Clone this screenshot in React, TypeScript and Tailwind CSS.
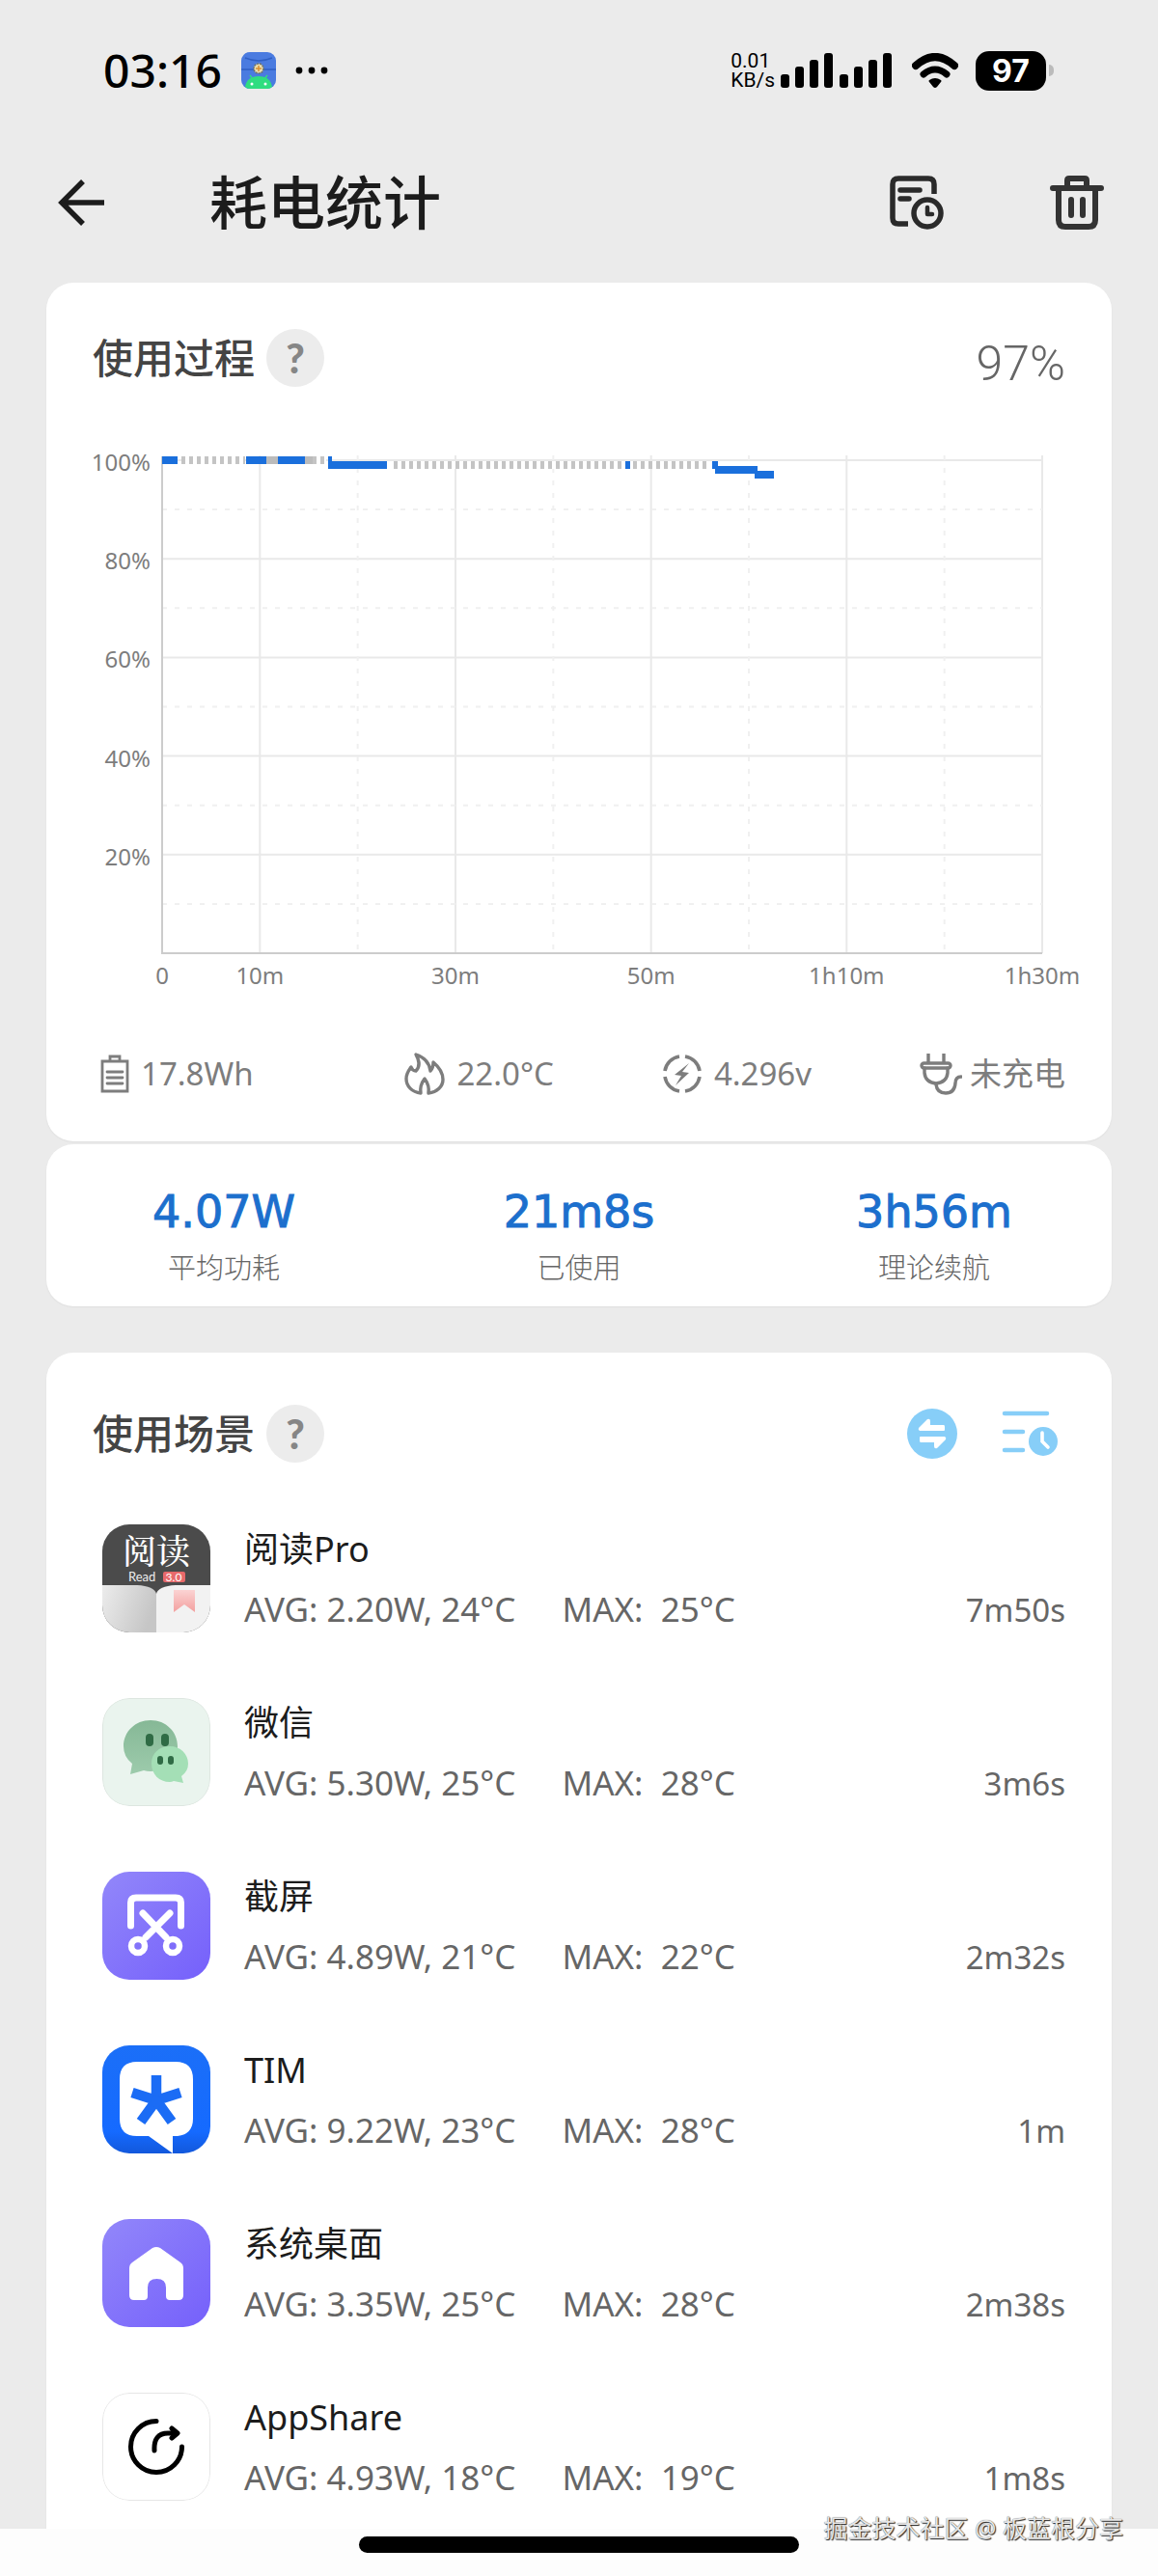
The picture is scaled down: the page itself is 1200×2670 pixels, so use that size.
import type { ReactNode } from "react";

const SCENES = [
  { name: "阅读Pro", avg: "2.20W, 24°C", max: "25°C", time: "7m50s", icon: <ReadIcon /> },
  { name: "微信", avg: "5.30W, 25°C", max: "28°C", time: "3m6s", icon: <WechatIcon /> },
  { name: "截屏", avg: "4.89W, 21°C", max: "22°C", time: "2m32s", icon: <ScreenshotIcon /> },
  { name: "TIM", avg: "9.22W, 23°C", max: "28°C", time: "1m", icon: <TimIcon /> },
  { name: "系统桌面", avg: "3.35W, 25°C", max: "28°C", time: "2m38s", icon: <HomeIcon /> },
  { name: "AppShare", avg: "4.93W, 18°C", max: "19°C", time: "1m8s", icon: <ShareIcon /> },
];

const SUMMARY = [
  { value: "4.07W", label: "平均功耗" },
  { value: "21m8s", label: "已使用" },
  { value: "3h56m", label: "理论续航" },
];

export default function App() {
  return (
    <div className="relative flex min-h-screen flex-col bg-[#ebebeb] font-['Noto_Sans','Noto_Sans_CJK_SC',sans-serif] text-[#1c1c1c]">
      <StatusBar />
      <Header />

      <main className="flex grow flex-col px-12">
        {/* 使用过程 */}
        <section className="rounded-[28px] bg-white pt-12 pb-[46px] shadow-xs">
          <div className="flex items-center justify-between px-12">
            <SectionTitle text="使用过程" />
            <span className="self-end font-['Roboto'] text-[50px] leading-[48px] font-light text-[#666]">97%</span>
          </div>
          <BatteryChart />
          <div className="mt-[54px] flex items-center gap-28 px-12 text-[33px] leading-[48px] text-[#7d7d7d]">
            <div className="mr-auto flex items-center gap-3 pl-2">
              <BatteryIcon />
              17.8Wh
            </div>
            <div className="flex items-center gap-3">
              <FireIcon />
              22.0°C
            </div>
            <div className="flex items-center gap-3">
              <VoltIcon />
              4.296v
            </div>
            <div className="flex items-center gap-2">
              <PlugIcon />
              未充电
            </div>
          </div>
        </section>

        {/* 汇总 */}
        <section className="mt-[3px] grid grid-cols-3 rounded-[28px] bg-white pt-10 pb-3 text-center shadow-xs">
          {SUMMARY.map((item) => (
            <div key={item.label}>
              <p className="font-['DejaVu_Sans'] text-[46px] leading-[60px] text-[#1c6fcd] [-webkit-text-stroke:1px_#1c6fcd]">
                {item.value}
              </p>
              <p className="text-[29px] leading-[56px] font-light text-[#666]">{item.label}</p>
            </div>
          ))}
        </section>

        {/* 使用场景 */}
        <section className="mt-12 grow rounded-t-[28px] bg-white px-12 pt-[54px] pb-5 shadow-xs">
          <div className="flex items-center justify-between">
            <SectionTitle text="使用场景" />
            <div className="flex items-center gap-[46px] pr-[6px]">
              <button type="button" aria-label="切换">
                <SwapIcon />
              </button>
              <button type="button" aria-label="按时间排序">
                <SortTimeIcon />
              </button>
            </div>
          </div>
          <ul className="mt-14 flex flex-col gap-[53px] pl-[10px]">
            {SCENES.map((scene) => (
              <li key={scene.name} className="flex items-center">
                <AppTile>{scene.icon}</AppTile>
                <div className="ml-[35px] grow pt-[6px]">
                  <p className="text-[36px] leading-[56px]">{scene.name}</p>
                  <div className="flex items-baseline pt-1 text-[35px] leading-[60px] text-[#666]">
                    <span>AVG: {scene.avg}</span>
                    <span className="ml-12 whitespace-pre">MAX:  {scene.max}</span>
                    <span className="ml-auto text-[33px]">{scene.time}</span>
                  </div>
                </div>
              </li>
            ))}
          </ul>
        </section>
      </main>

      <footer className="flex h-[49px] justify-center bg-[#fdfdfd] pt-2">
        <div className="h-[17px] w-[38%] rounded-full bg-black" />
      </footer>

      <p className="absolute right-9 bottom-8 text-[25px] leading-9 text-[#e6e6e6] [text-shadow:1px_1px_1px_#222,0_0_1px_#555]">
        掘金技术社区 @ 板蓝根分享
      </p>
    </div>
  );
}

function StatusBar() {
  return (
    <div className="flex h-[146px] items-center justify-between pr-[108px] pl-[107px] text-black">
      <div className="flex items-center">
        <span className="text-[48px] leading-[48px] font-medium">03:16</span>
        <svg className="ml-5" width="36" height="38" viewBox="0 0 36 38" aria-hidden="true">
          <rect width="36" height="38" rx="9" fill="#4a7be0" />
          <path d="M4 6Q18 12 32 6M0 18H36" stroke="#2f5fc4" strokeWidth="1.5" fill="none" />
          <path d="M4 36Q6 25 18 25T32 36Q30 38 27 38H9Q6 38 4 36Z" fill="#2fdd80" />
          <path d="M9 24L12 28M27 24L24 28" stroke="#2fdd80" strokeWidth="1.5" />
          <circle cx="18" cy="17" r="5" fill="#e8dcae" stroke="#6f7368" strokeWidth="1.5" strokeDasharray="2 1" />
          <path d="M18 14V20M15 17H21" stroke="#d9902f" strokeWidth="1.5" />
          <circle cx="11" cy="33" r="1.5" fill="#fff" />
          <circle cx="25" cy="33" r="1.5" fill="#fff" />
        </svg>
        <svg className="ml-5" width="34" height="8" viewBox="0 0 34 8" aria-hidden="true">
          <circle cx="4" cy="4" r="3.4" />
          <circle cx="17" cy="4" r="3.4" />
          <circle cx="30" cy="4" r="3.4" />
        </svg>
      </div>

      <div className="flex items-center">
        <div className="font-['Roboto'] text-[21px] leading-[20px]">
          <p>0.01</p>
          <p>KB/s</p>
        </div>
        <svg className="ml-[6px]" width="116" height="36" viewBox="0 0 116 36" aria-hidden="true">
          <rect x="0" y="22" width="9" height="14" rx="3" />
          <rect x="15" y="14" width="9" height="22" rx="3" />
          <rect x="30" y="7" width="9" height="29" rx="3" />
          <rect x="45" y="0" width="9" height="36" rx="3" />
          <rect x="61" y="22" width="9" height="14" rx="3" />
          <rect x="76" y="14" width="9" height="22" rx="3" />
          <rect x="91" y="7" width="9" height="29" rx="3" />
          <rect x="106" y="0" width="9" height="36" rx="3" />
        </svg>
        <svg className="ml-5" width="48" height="36" viewBox="0 0 48 36" aria-hidden="true">
          <path d="M4 13Q24 -5 44 13" fill="none" stroke="#000" strokeWidth="8" strokeLinecap="round" />
          <path d="M12 22Q24 12 36 22" fill="none" stroke="#000" strokeWidth="7" strokeLinecap="round" />
          <path d="M18 28Q24 24 30 28Q31 29 30 30L26 35Q24 37 22 35L18 30Q17 29 18 28Z" />
        </svg>
        <div className="ml-[18px] flex h-[41px] w-[73px] items-center justify-center rounded-[14px] bg-black font-['Inter'] text-[32px] leading-[41px] font-bold text-white">
          97
        </div>
        <div className="ml-[3px] h-3 w-[5px] rounded-r-full bg-[#bbb]" />
      </div>
    </div>
  );
}

function Header() {
  return (
    <header className="flex h-[147px] items-center pr-[56px] pb-5 pl-[60px]">
      <button type="button" aria-label="返回">
        <svg width="49" height="48" viewBox="0 0 49 48" fill="none" stroke="#1c1c1c" strokeWidth="5.5" aria-hidden="true">
          <path d="M26 2L4 24L26 46M4 24H48" />
        </svg>
      </button>
      <h1 className="ml-[108px] text-[60px] leading-[80px] font-medium">耗电统计</h1>
      <button type="button" aria-label="历史记录" className="ml-auto">
        <svg width="58" height="58" viewBox="0 0 58 58" fill="none" stroke="#2a2a2a" strokeWidth="5.5" strokeLinecap="round" strokeLinejoin="round" aria-hidden="true">
          <path d="M20 51H10Q4 51 4 45V10Q4 4 10 4H41Q47 4 47 10V20" strokeLinecap="butt" />
          <path d="M12 16H32M12 25H21" />
          <circle cx="40" cy="40" r="14" />
          <path d="M40 34V41H45" strokeWidth="4.5" />
        </svg>
      </button>
      <button type="button" aria-label="删除" className="ml-[109px]">
        <svg width="56" height="58" viewBox="0 0 56 58" fill="none" stroke="#333" strokeWidth="6" strokeLinecap="round" strokeLinejoin="round" aria-hidden="true">
          <path d="M3 14H53M18 13V6Q18 4 20 4H36Q38 4 38 6V13" />
          <path d="M9 15V47Q9 54 16 54H40Q47 54 47 47V15M22 26V42M34 26V42" />
        </svg>
      </button>
    </header>
  );
}

function SectionTitle({ text }: { text: string }) {
  return (
    <div className="flex items-center gap-3">
      <h2 className="text-[42px] leading-[60px] font-medium text-[#444]">{text}</h2>
      <button
        type="button"
        aria-label={`${text}说明`}
        className="size-[60px] rounded-full bg-[#ececec] text-center font-['Lato'] text-[42px] leading-[60px] font-black text-[#868686]"
      >
        ?
      </button>
    </div>
  );
}

const TOP = 22;
const BOTTOM = 533;
const LEFT = 120;
const RIGHT = 1032;

const toX = (minute: number) => LEFT + ((RIGHT - LEFT) * minute) / 90;
const toY = (percent: number) => BOTTOM - ((BOTTOM - TOP) * percent) / 100;

const X_LABELS = [
  { minute: 0, text: "0" },
  { minute: 10, text: "10m" },
  { minute: 30, text: "30m" },
  { minute: 50, text: "50m" },
  { minute: 70, text: "1h10m" },
  { minute: 90, text: "1h30m" },
];

// 亮屏: 蓝色实线, 熄屏: 灰色虚线
const SCREEN_ON = [
  { x: 120, w: 16, y: 18 },
  { x: 207, w: 21, y: 18 },
  { x: 240, w: 28, y: 18 },
  { x: 292, w: 4, y: 18 },
  { x: 292, w: 61, y: 23 },
  { x: 600, w: 5, y: 23 },
  { x: 690, w: 6, y: 23 },
  { x: 693, w: 44, y: 28 },
  { x: 734, w: 20, y: 33 },
];
const SCREEN_OFF = [
  { from: 140, to: 206, y: 22 },
  { from: 276, to: 290, y: 22 },
  { from: 360, to: 598, y: 27 },
  { from: 608, to: 686, y: 27 },
];

function BatteryChart() {
  return (
    <svg className="mt-[54px] block h-auto w-full font-['Noto_Sans']" viewBox="0 0 1104 580" role="img" aria-label="电量变化曲线">
      <g stroke="#e9e9e9" strokeWidth="2">
        {[20, 40, 60, 80, 100].map((p) => (
          <line key={p} x1={LEFT} x2={RIGHT} y1={toY(p)} y2={toY(p)} />
        ))}
        {[10, 30, 50, 70, 90].map((m) => (
          <line key={m} x1={toX(m)} x2={toX(m)} y1={TOP - 5} y2={BOTTOM} />
        ))}
      </g>
      <g stroke="#f0f0f0" strokeWidth="2" strokeDasharray="5 8">
        {[10, 30, 50, 70, 90].map((p) => (
          <line key={p} x1={LEFT} x2={RIGHT} y1={toY(p)} y2={toY(p)} />
        ))}
        {[20, 40, 60, 80].map((m) => (
          <line key={m} x1={toX(m)} x2={toX(m)} y1={TOP - 5} y2={BOTTOM} />
        ))}
      </g>
      <path d={`M${LEFT} ${TOP - 4}V${BOTTOM}H${RIGHT}`} fill="none" stroke="#ccc" strokeWidth="2" />

      {SCREEN_OFF.map((s) => (
        <g key={s.from}>
          <line x1={s.from} x2={s.to} y1={s.y} y2={s.y} stroke="#fff" strokeWidth="8" />
          <line x1={s.from} x2={s.to} y1={s.y} y2={s.y} stroke="#c4c4c4" strokeWidth="8" strokeDasharray="4 4" />
        </g>
      ))}
      <rect x="228" y="18" width="12" height="8" fill="#bbb" />
      <rect x="268" y="18" width="8" height="8" fill="#bbb" />
      {SCREEN_ON.map((s) => (
        <rect key={`${s.x}-${s.y}`} x={s.x} y={s.y} width={s.w} height="8" fill="#1a6fdc" />
      ))}

      <g fill="#7d7d7d" fontSize="24">
        {[20, 40, 60, 80, 100].map((p) => (
          <text key={p} x={LEFT - 12} y={toY(p) + 11} textAnchor="end">
            {p}%
          </text>
        ))}
        {X_LABELS.map((l) => (
          <text key={l.text} x={toX(l.minute)} y={BOTTOM + 32} textAnchor="middle">
            {l.text}
          </text>
        ))}
      </g>
    </svg>
  );
}

function BatteryIcon() {
  return (
    <svg width="30" height="42" viewBox="0 0 30 42" fill="none" stroke="currentColor" strokeWidth="2.8" aria-hidden="true">
      <path d="M2 8H28V39H2ZM10 8V3H20V8" />
      <path d="M7 19H23M7 25H23M7 31H23" strokeLinecap="round" />
    </svg>
  );
}

function FireIcon() {
  return (
    <svg width="42" height="44" viewBox="0 0 42 44" fill="none" stroke="currentColor" strokeWidth="3.4" strokeLinejoin="round" aria-hidden="true">
      <path d="M17 42C8 41 2 35 2 27C2 21 5 18 7 15C8 18 10 19 12 19C16 15 16 9 12 2C21 5 26 11 27 19C29 17 30 13 30 10C36 15 40 21 40 28C40 35 34 41 25 42C26 36 24 31 21 27C18 31 16 36 17 42Z" />
    </svg>
  );
}

function VoltIcon() {
  return (
    <svg width="42" height="42" viewBox="0 0 42 42" fill="none" stroke="currentColor" strokeWidth="3.6" aria-hidden="true">
      <path d="M24 3A18 18 0 0 1 39 18M39 24A18 18 0 0 1 24 39M18 39A18 18 0 0 1 3 24M3 18A18 18 0 0 1 18 3" />
      <path d="M28 10L13 22L20 23L14 33L28 20L21 19Z" fill="currentColor" stroke="none" />
    </svg>
  );
}

function PlugIcon() {
  return (
    <svg width="44" height="46" viewBox="0 0 44 46" fill="none" stroke="currentColor" strokeWidth="3.4" strokeLinecap="round" aria-hidden="true">
      <path d="M9 2V12M25 2V12" strokeLinecap="butt" />
      <rect x="2" y="12" width="30" height="5" rx="2.5" />
      <path d="M5 17V22Q6 32 17 33Q28 32 29 22V17" />
      <path d="M17 34Q18 43 27 43Q36 43 37 33Q37 26 43 26" />
    </svg>
  );
}

function SwapIcon() {
  return (
    <svg width="52" height="52" viewBox="0 0 52 52" aria-hidden="true">
      <circle cx="26" cy="26" r="26" fill="#87cef8" />
      <path d="M39 19V22Q39 23 38 23H13Q11 22 12 20L21 11Q24 10 24 13V17H38Q39 17 39 19Z" fill="#fff" />
      <path d="M13 33V30Q13 29 14 29H39Q41 30 40 32L31 41Q28 42 28 39V35H14Q13 35 13 33Z" fill="#fff" />
    </svg>
  );
}

function SortTimeIcon() {
  return (
    <svg width="60" height="50" viewBox="0 0 60 50" aria-hidden="true">
      <path d="M3 4H47M3 23H22M3 42H22" stroke="#87cef8" strokeWidth="4.5" strokeLinecap="round" />
      <circle cx="43" cy="33" r="15" fill="#87cef8" />
      <path d="M42 24V33L48 39" stroke="#fff" strokeWidth="3.6" strokeLinecap="round" fill="none" />
    </svg>
  );
}

function AppTile({ children }: { children: ReactNode }) {
  return <div className="size-28 shrink-0 overflow-hidden rounded-[28px]">{children}</div>;
}

function ReadIcon() {
  return (
    <svg viewBox="0 0 112 112" aria-hidden="true">
      <defs>
        <linearGradient id="page" x1="0" y1="0" x2="1" y2="0.3">
          <stop offset="0" stopColor="#ececec" />
          <stop offset="1" stopColor="#c6c6c6" />
        </linearGradient>
        <linearGradient id="mark" x1="0" y1="0" x2="0" y2="1">
          <stop offset="0" stopColor="#fbd3d3" />
          <stop offset="1" stopColor="#f3a09f" />
        </linearGradient>
      </defs>
      <rect width="112" height="112" fill="#4b4b4b" />
      <path d="M0 63H36Q54 64 56 72V112H0Z" fill="url(#page)" />
      <path d="M112 63H76Q58 64 56 72V112H112Z" fill="#f2f2f2" />
      <path d="M74 68H96V91L85 83L74 91Z" fill="url(#mark)" />
      <text x="56" y="41" textAnchor="middle" fontSize="35" fontWeight="500" fill="#fff" className="font-['Noto_Serif_CJK_SC','Noto_Sans_CJK_SC',serif]">
        阅读
      </text>
      <text x="27" y="59" fontSize="13" fill="#eee" className="font-['Lato']">
        Read
      </text>
      <rect x="63" y="49" width="23" height="11" rx="2" fill="#e8696b" />
      <text x="74" y="59" textAnchor="middle" fontSize="12" fill="#fff" className="font-['Lato']">
        3.0
      </text>
    </svg>
  );
}

function WechatIcon() {
  return (
    <svg viewBox="0 0 112 112" aria-hidden="true">
      <defs>
        <linearGradient id="bubble" x1="0" y1="0" x2="0" y2="1">
          <stop offset="0" stopColor="#86b896" />
          <stop offset="1" stopColor="#9dcbac" />
        </linearGradient>
      </defs>
      <rect x="0.5" y="0.5" width="111" height="111" rx="27.5" fill="#eaf4ee" stroke="#dde6e0" />
      <path d="M50 23C66 23 78 35 78 50S66 76 50 76Q46 76 43 75L29 79L31 68Q22 61 22 50C22 35 34 23 50 23Z" fill="url(#bubble)" />
      <rect x="45" y="37" width="8" height="13" rx="4" fill="#2f6b45" />
      <rect x="61" y="37" width="8" height="13" rx="4" fill="#2f6b45" />
      <path d="M70 50C81 50 89 58 89 68Q89 76 82 81L84 88L74 86Q72 87 70 87C59 87 51 79 51 68S59 50 70 50Z" fill="#a4dfb6" />
      <rect x="57" y="60" width="6" height="9" rx="3" fill="#2f6b45" />
      <rect x="68" y="60" width="6" height="9" rx="3" fill="#2f6b45" />
    </svg>
  );
}

function PurpleBackground({ id }: { id: string }) {
  return (
    <>
      <defs>
        <linearGradient id={id} x1="0" y1="0" x2="1" y2="1">
          <stop offset="0" stopColor="#9287fa" />
          <stop offset="1" stopColor="#7560fb" />
        </linearGradient>
      </defs>
      <rect width="112" height="112" fill={`url(#${id})`} />
    </>
  );
}

function ScreenshotIcon() {
  return (
    <svg viewBox="0 0 112 112" fill="none" stroke="#fff" strokeWidth="7" strokeLinecap="round" aria-hidden="true">
      <g stroke="none">
        <PurpleBackground id="shot" />
      </g>
      <path d="M29.5 56V32Q29.5 27 35 27H76Q81.5 27 81.5 32V56" />
      <path d="M42 43L66 68M70 43L45 68" />
      <circle cx="37" cy="77" r="7" strokeWidth="6.5" />
      <circle cx="73" cy="77" r="7" strokeWidth="6.5" />
    </svg>
  );
}

function TimIcon() {
  return (
    <svg viewBox="0 0 112 112" aria-hidden="true">
      <defs>
        <linearGradient id="tim" x1="0" y1="0" x2="0" y2="1">
          <stop offset="0" stopColor="#1b6ff8" />
          <stop offset="0.8" stopColor="#156aff" />
          <stop offset="1" stopColor="#1258dc" />
        </linearGradient>
      </defs>
      <rect width="112" height="112" fill="url(#tim)" />
      <path d="M36 17H76Q94 17 94 35V76Q94 92 78 94H73V112L48 94H36Q18 94 18 76V35Q18 17 36 17Z" fill="#fff" />
      <path d="M56 31V57M56 57L31 49M56 57L81 49M56 57L40 79M56 57L72 79" stroke="#1b6cf5" strokeWidth="10.5" />
      <circle cx="56" cy="58" r="6" fill="#1b6cf5" />
    </svg>
  );
}

function HomeIcon() {
  return (
    <svg viewBox="0 0 112 112" aria-hidden="true">
      <PurpleBackground id="home" />
      <path d="M52 30Q56 28 60 30L81 45Q84 47 84 51V79Q84 84 79 84H70Q66 84 66 80V71Q66 62 56.5 62T47 71V80Q47 84 43 84H33Q28 84 28 79V51Q28 47 31 45Z" fill="#fff" />
    </svg>
  );
}

function ShareIcon() {
  return (
    <svg viewBox="0 0 112 112" fill="none" stroke="#000" strokeWidth="5" strokeLinecap="round" strokeLinejoin="round" aria-hidden="true">
      <rect x="0.5" y="0.5" width="111" height="111" rx="27.5" fill="#fff" stroke="#e6e6e6" strokeWidth="1" />
      <path d="M56 29.5A26.5 26.5 0 1 0 82.5 56" />
      <path d="M54 60Q53 42 68 42H77M72 37L78 42L72 47" />
    </svg>
  );
}
